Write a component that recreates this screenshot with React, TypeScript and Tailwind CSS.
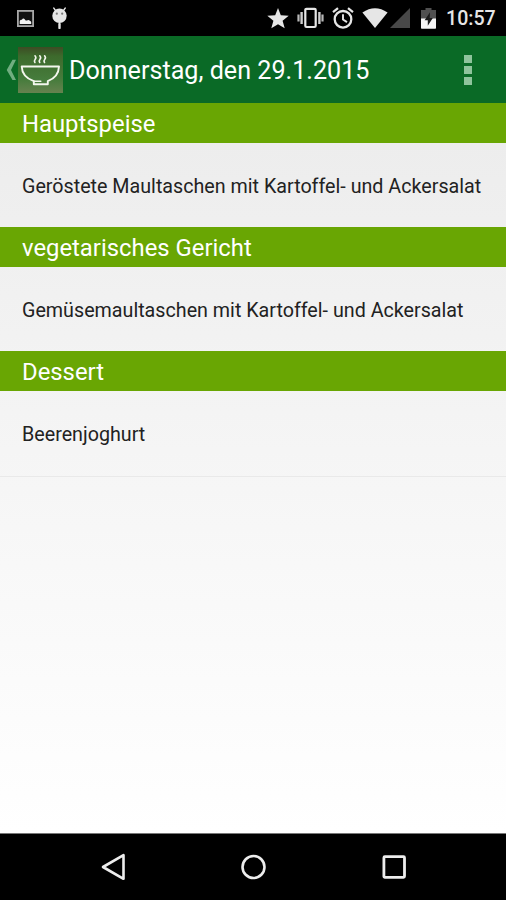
const menu = [
  { course: 'Hauptspeise', dish: 'Geröstete Maultaschen mit Kartoffel- und Ackersalat' },
  { course: 'vegetarisches Gericht', dish: 'Gemüsemaultaschen mit Kartoffel- und Ackersalat' },
  { course: 'Dessert', dish: 'Beerenjoghurt' },
];

function StatusBar() {
  return (
    <div className="flex h-[36px] shrink-0 items-center bg-black pl-[17px] pr-[11px] text-[#e6e6e6]">
      {/* notifications */}
      <svg width="17" height="17" viewBox="0 0 17 17" className="shrink-0">
        <rect x="0.9" y="0.9" width="15.2" height="15.2" fill="#111" stroke="#a8a8a8" strokeWidth="1.8" />
        <path d="M2.700 14v-3q1-1.800 2.200-1.200q1.200-2.200 3-.4q1 1.600 2 1.100q1.600-.9 3 .2q1 .3 1.300 1.200v2.100z" fill="#f2f2f2" />
      </svg>
      <svg width="17" height="22" viewBox="0 0 17 22" className="ml-[17px] shrink-0">
        <path d="M2.700 1l2.200 3M14.300 1l-2.200 3" stroke="currentColor" strokeWidth="1.300" strokeLinecap="round" />
        <circle cx="8.500" cy="8.800" r="7.200" fill="currentColor" />
        <path d="M8.500 17v4" stroke="currentColor" strokeWidth="2.400" strokeLinecap="round" />
        <path d="M8.500 15v3" stroke="currentColor" strokeWidth="1.200" />
        <circle cx="5.800" cy="6.700" r="1.100" fill="#777" />
        <circle cx="11.200" cy="6.700" r="1.100" fill="#777" />
      </svg>

      {/* system icons */}
      <svg width="22" height="21" viewBox="0 0 22 21" className="ml-auto shrink-0">
        <path d="M11 0l2.800 7.200 7.900.5-6.100 5L17.700 20.300 11 16.200 4.300 20.300l2.100-7.600-6.100-5 7.900-.5z" fill="currentColor" />
      </svg>
      <svg width="27" height="22" viewBox="0 0 27 22" className="ml-[8px] shrink-0">
        <rect x="8.300" y="1.800" width="10.400" height="18.200" rx="1.200" fill="none" stroke="currentColor" strokeWidth="2.200" />
        <path d="M4.600 5v12M22.400 5v12" stroke="#d0d0d0" strokeWidth="2.400" />
        <path d="M1.500 7.500v7M25.500 7.500v7" stroke="#b8b8b8" strokeWidth="2.200" />
      </svg>
      <svg width="22" height="22" viewBox="0 0 22 22" className="ml-[8px] shrink-0" fill="none" stroke="currentColor">
        <circle cx="11" cy="12.300" r="8.300" strokeWidth="2.300" />
        <path d="M11 7.300v5.200l4 2.600" strokeWidth="1.900" />
        <path d="M1 5.200l5-4.100M21 5.200l-5-4.100" strokeWidth="2.200" />
      </svg>
      <svg width="26" height="21" viewBox="0 0 26 21" className="ml-[8px] shrink-0">
        <path d="M0.400 4.500Q13-4.200 25.600 4.500L13 20z" fill="currentColor" />
      </svg>
      <svg width="20" height="20" viewBox="0 0 20 20" className="ml-[2px] shrink-0">
        <path d="M20 0v20H0z" fill="#484848" />
      </svg>
      <svg width="15" height="21" viewBox="0 0 15 21" className="ml-[11px] shrink-0">
        <path d="M4.500 0h6v2H15v9H0V2h4.500z" fill="#505050" />
        <path d="M0 10.500h15V20q0 .8-.8.8H.8Q0 20.800 0 20z" fill="#f4f4f4" />
        <path d="M9 4.300L3.600 12.200h3.200v5.500l5-7.800H8.700z" fill="#1a1a1a" />
      </svg>
      <span className="ml-[10px] w-[49px] whitespace-nowrap pt-[2px] text-[19.600px] leading-[34px] font-medium">10:57</span>
    </div>
  );
}

function BowlIcon() {
  return (
    <svg width="45" height="46" viewBox="0 0 45 46" className="shrink-0" fill="none">
      <defs>
        <linearGradient id="bowl-bg" x1="0" y1="0" x2="0" y2="1">
          <stop offset="0" stopColor="#3d4c24" />
          <stop offset="0.2" stopColor="#3d6a2c" />
          <stop offset="0.7" stopColor="#467c3c" />
          <stop offset="1" stopColor="#66824f" />
        </linearGradient>
      </defs>
      <rect width="45" height="46" fill="url(#bowl-bg)" />
      <g stroke="#f4f7ee" strokeLinecap="round" strokeLinejoin="round">
        <path d="M17 8.800q1.600 1.800.2 3.500t-.3 3.200M21.800 8.800q1.600 1.800.2 3.500t-.3 3.200M26.600 8.800q1.600 1.800.2 3.500t-.3 3.200" strokeWidth="1.600" />
        <path d="M3.700 19.500h37.300q-.4 10.500-11.200 14.700v3H15.800v-3Q4.100 30 3.700 19.500z" strokeWidth="1.900" />
        <path d="M15.800 34.200h7" strokeWidth="1.500" />
      </g>
    </svg>
  );
}

function ActionBar() {
  return (
    <header className="flex h-[67px] shrink-0 items-center bg-[#0a6a26] pl-[6px] pr-[34px]">
      <svg width="11" height="22" viewBox="0 0 11 22" className="shrink-0">
        <path d="M6.500 0.800h3.500L5 11l5 10H6.500L0.700 11z" fill="#70ad80" />
      </svg>
      <div className="ml-px">
        <BowlIcon />
      </div>
      <h1 className="ml-[6px] whitespace-nowrap pt-[3px] text-[25.150px] leading-[30px] text-white">
        Donnerstag, den 29.1.2015
      </h1>
      <div className="ml-auto flex flex-col gap-[3px]">
        <span className="h-[8px] w-[8px] bg-[#8fc49c]" />
        <span className="h-[8px] w-[8px] bg-[#8fc49c]" />
        <span className="h-[8px] w-[8px] bg-[#8fc49c]" />
      </div>
    </header>
  );
}

function NavBar() {
  return (
    <nav className="flex h-[67px] shrink-0 items-center justify-between border-t border-[#777] bg-black px-[100px]">
      <svg width="26" height="28" viewBox="0 0 26 28" fill="none" stroke="#ededed" strokeWidth="2.600" strokeLinejoin="round">
        <path d="M23.500 2.200v23.600L3 14z" />
      </svg>
      <svg width="27" height="28" viewBox="0 0 27 28" fill="none" stroke="#ededed" strokeWidth="2.600">
        <circle cx="13.500" cy="14" r="11" />
      </svg>
      <svg width="25" height="28" viewBox="0 0 25 28" fill="none" stroke="#ededed" strokeWidth="2.800">
        <rect x="2.900" y="3.700" width="20.600" height="20.600" rx="1" />
      </svg>
    </nav>
  );
}

function App() {
  return (
    <div className="flex h-[900px] w-[506px] flex-col overflow-hidden font-['Roboto',sans-serif]">
      <StatusBar />
      <ActionBar />
      <main className="flex-1 bg-linear-to-b from-[#ececec] to-white">
        {menu.map(({ course, dish }) => (
          <section key={course}>
            <h2 className="h-[39.500px] bg-[#69a603] pl-[22px] text-[23.850px] leading-[43px] text-white">{course}</h2>
            <p className="h-[84.700px] whitespace-nowrap pl-[22px] text-[19.690px] leading-[88px] text-[#222]">{dish}</p>
          </section>
        ))}
        <div className="h-px bg-[#e9e9e9]" />
      </main>
      <NavBar />
    </div>
  );
}

export default App;
